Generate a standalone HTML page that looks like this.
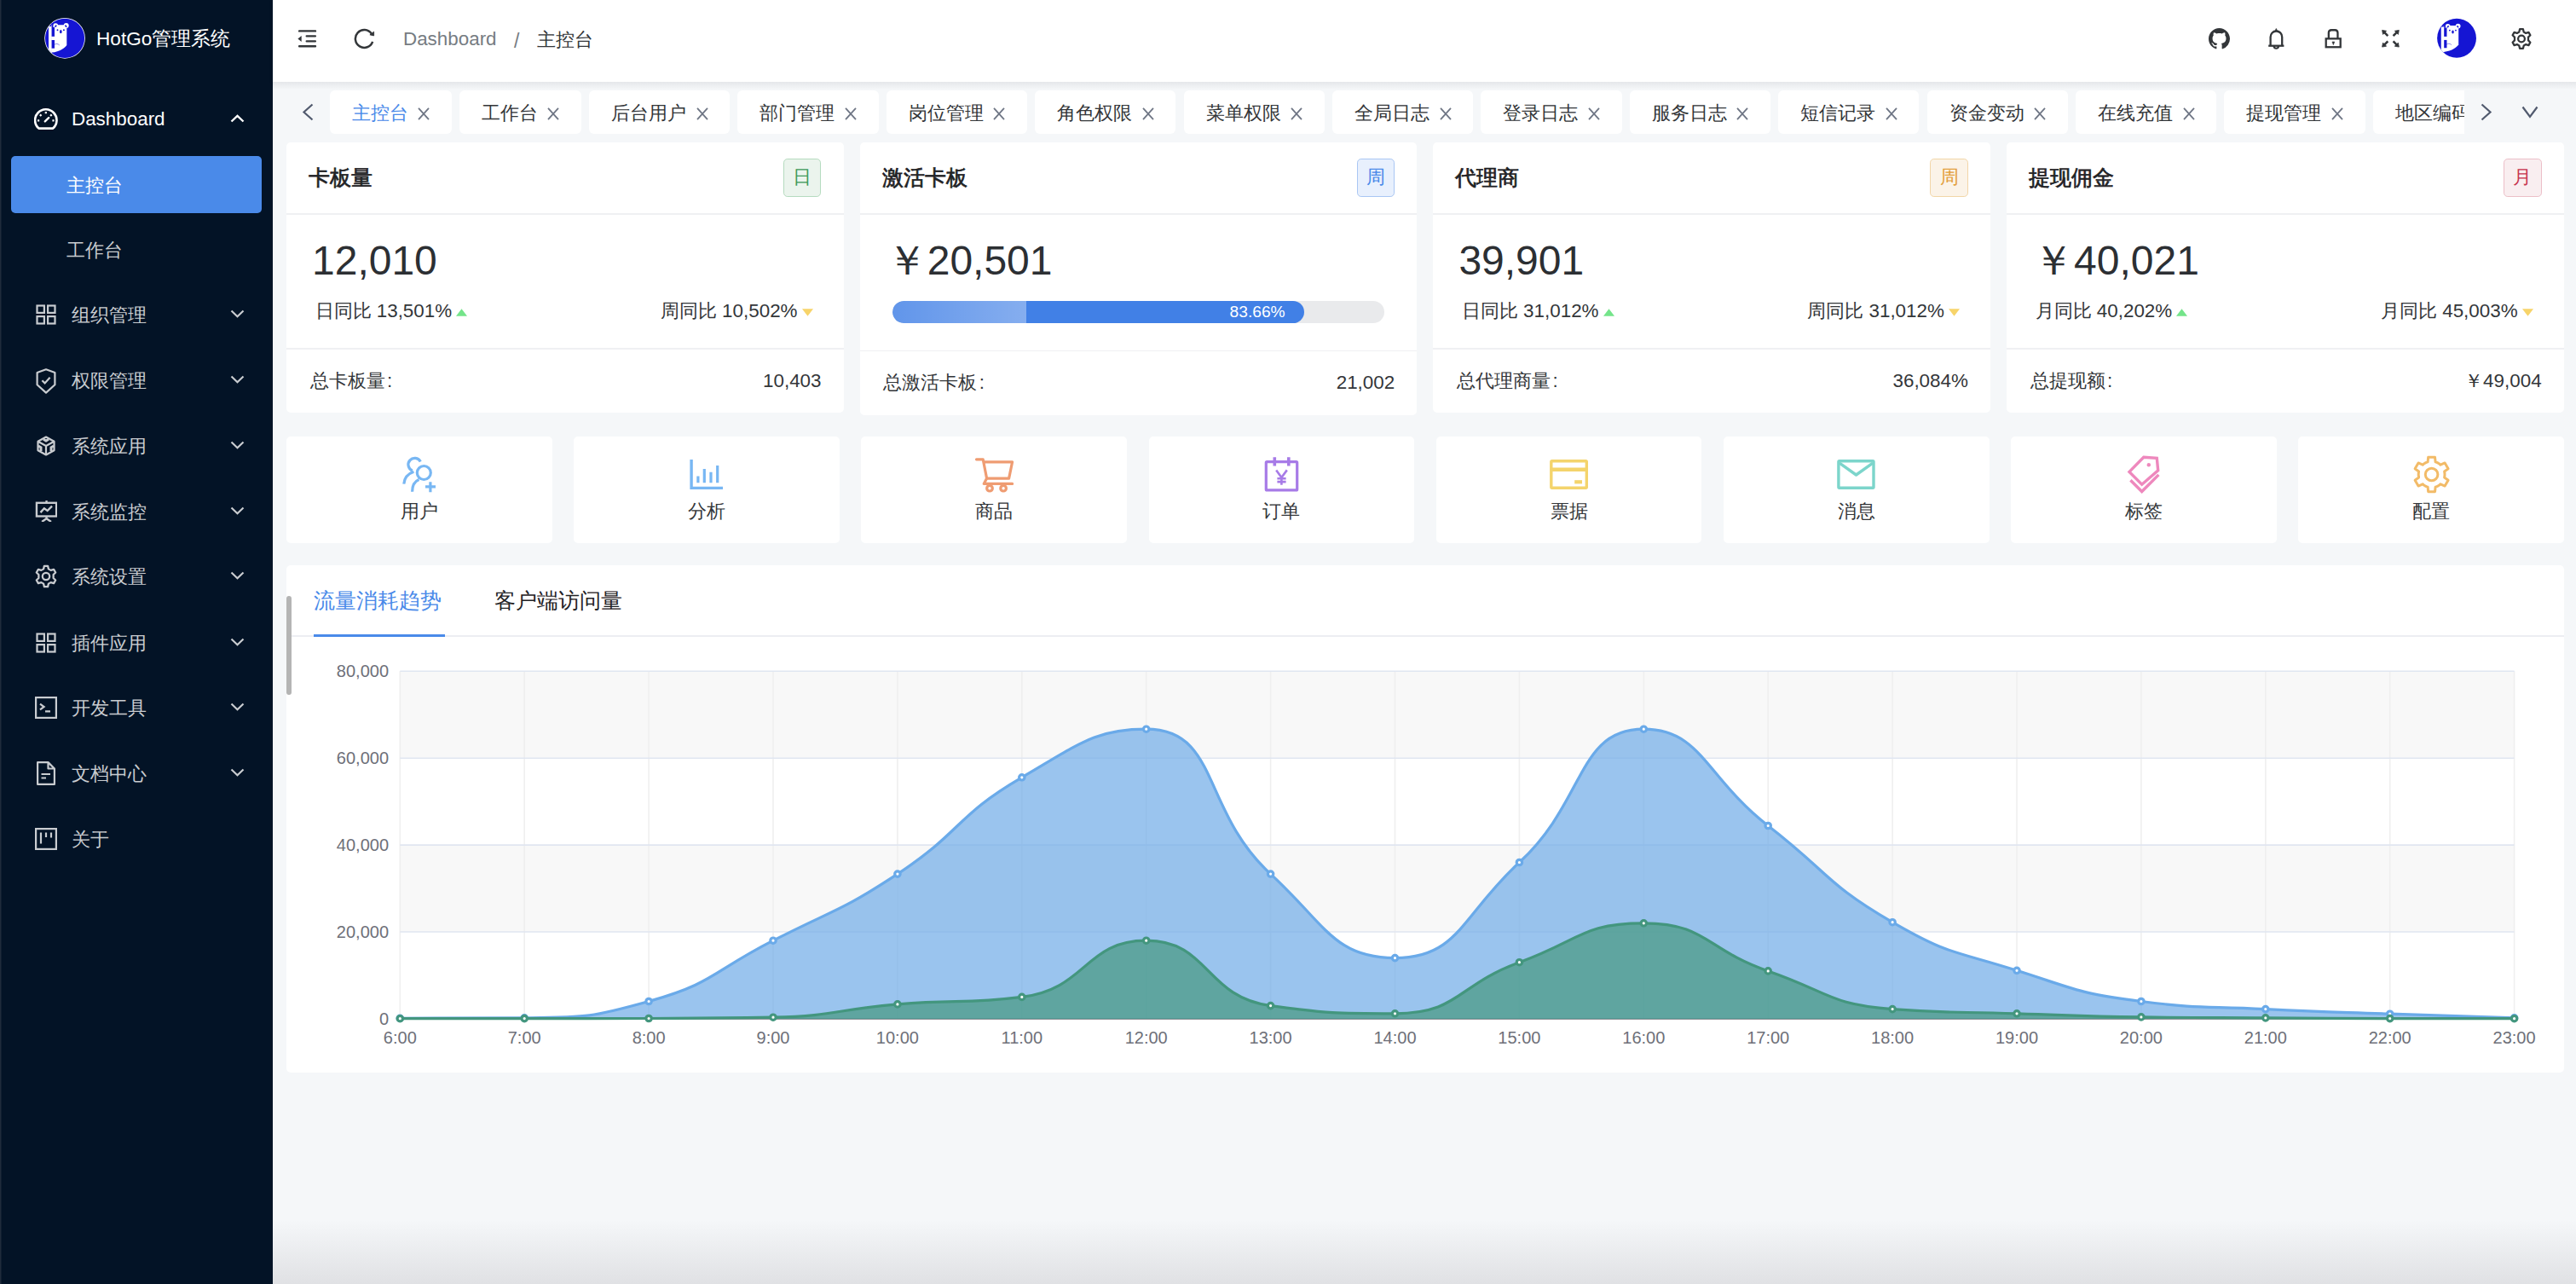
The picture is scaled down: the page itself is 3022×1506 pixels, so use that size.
<!DOCTYPE html>
<html><head><meta charset="utf-8">
<style>
*{box-sizing:border-box;margin:0;padding:0}
html,body{width:3022px;height:1506px;overflow:hidden;background:#f5f7f9;font-family:"Liberation Sans",sans-serif;color:#333639}
.abs{position:absolute}
#sider{position:absolute;left:0;top:0;width:320px;height:1506px;background:#031326;box-shadow:inset 1.5px 0 0 #1f2b3b}
#sider .logo-text{position:absolute;left:113px;top:27px;font-size:22.6px;line-height:38px;color:#fff;white-space:nowrap}
.mi{position:absolute;left:0;width:320px;height:67px}
.mi .ic{position:absolute;left:42px;top:21.5px;width:24px;height:24px}
.mi .tx{position:absolute;left:84px;top:0.8px;line-height:67px;font-size:22.4px;color:#c9ccd0;white-space:nowrap}
.mi .ch{position:absolute;left:270px;top:28px;width:17px;height:10px}
.sub .tx{left:78px}
#header{position:absolute;left:320px;top:0;width:2702px;height:96px;background:#fff;box-shadow:0 1px 6px rgba(0,21,41,0.06)}
.tabs{position:absolute;left:320px;top:96px;width:2702px;height:70px;background:#f5f7f9}
.tab{position:absolute;top:106px;height:51px;background:#fff;border-radius:6px;overflow:hidden;white-space:nowrap}
.tab .t{position:absolute;left:26px;top:0.7px;line-height:51px;font-size:22.4px;color:#333639}
.tab .x{position:absolute;top:19.5px;width:14px;height:15px}
.card{position:absolute;top:167px;width:653.5px;height:317px;background:#fff;border-radius:5px}
.card .title{position:absolute;left:26px;top:187px;font-size:25.6px;font-weight:600;color:#1f2225}
.qa{position:absolute;top:512px;width:311.6px;height:124.5px;background:#fff;border-radius:5px}
.card .ctitle{font-size:24.6px;font-weight:400;-webkit-text-stroke:0.7px #1f2225;color:#1f2225;white-space:nowrap}
.card .tag{width:44.6px;height:44.6px;border:1.6px solid;border-radius:4.8px;font-size:22.4px;line-height:41.4px;text-align:center}
.card .hr{left:0;width:100%;height:1.6px;background:#eff0f3}
.card .cnum{top:111px;font-size:48px;line-height:56px;color:#2c2f33;white-space:nowrap}
.card .csub{top:181px;font-size:22.4px;line-height:34px;color:#333639;white-space:nowrap}
.card .tri{display:inline-block;margin-left:5px;vertical-align:middle}
.card .cft{top:262.5px;font-size:22.4px;line-height:34px;color:#333639;white-space:nowrap}
.prog{left:38.3px;top:185.8px;width:577px;height:25.8px;border-radius:13px;background:#e9eaec;overflow:hidden}
.prog .fill{position:absolute;left:0;top:0;height:100%;width:83.66%;background:#4180e6;border-radius:13px;overflow:hidden}
.prog .shine{position:absolute;left:0;top:0;height:100%;width:156.6px;background:linear-gradient(90deg,rgba(255,255,255,0.17),rgba(255,255,255,0.36))}
.prog span{position:absolute;right:22px;top:0;line-height:25.8px;font-size:19.2px;color:#fff}
.qa .qal{position:absolute;left:0;width:100%;top:71px;text-align:center;font-size:22.4px;line-height:34px;color:#333639}
.ctab{top:685px;font-size:25px;line-height:38px;color:#1f2225;white-space:nowrap}
.colon{margin-left:2.5px}
</style></head><body>

<div id="sider">
  <svg class="abs" style="left:50px;top:19px" width="52" height="52" viewBox="0 0 52 52">
    <defs><clipPath id="lc"><circle cx="26.05" cy="25.8" r="23.1"/></clipPath></defs>
    <circle cx="26.05" cy="25.8" r="23.85" fill="#fff"/>
    <circle cx="26.05" cy="25.8" r="23.1" fill="#1515d3"/>
    <g clip-path="url(#lc)" fill="#fff">
      <rect x="7" y="12" width="3.7" height="31"/>
      <path d="M10.2 10.3 H28.3 V33.9 C26 36.8 21 41.5 10.2 42.6 Z"/>
      <circle cx="15.2" cy="11.2" r="3"/><circle cx="27.7" cy="11" r="3"/>
    </g>
    <g fill="#1515d3">
      <rect x="10.6" y="12.9" width="3.4" height="10.9"/>
      <rect x="10.6" y="28" width="3.4" height="9.7"/>
      <rect x="10.6" y="8" width="1.8" height="5"/>
      <ellipse cx="15.4" cy="11.7" rx="0.9" ry="1.5" transform="rotate(40 15.4 11.7)"/>
      <ellipse cx="27.3" cy="11.7" rx="0.9" ry="1.5" transform="rotate(-40 27.3 11.7)"/>
      <circle cx="17.5" cy="16.2" r="0.95"/><circle cx="24.9" cy="16.2" r="0.95"/>
      <ellipse cx="21.3" cy="18.2" rx="1.3" ry="2.1"/>
    </g>
    <path d="M13.6 33.5 C15 32 18 32 19.8 34" stroke="#1515d3" stroke-width="0.5" fill="none"/>
  </svg>
  <div class="logo-text">HotGo管理系统</div>

  <!-- Dashboard -->
  <div class="mi" style="top:105px">
    <svg class="abs" style="left:40px;top:22px" width="28" height="26" viewBox="0 0 28 26" fill="none" stroke="#fff">
      <path d="M5.49 23.6 A12.7 12.7 0 1 1 22.11 23.6 Z" stroke-width="2.6" stroke-linejoin="round"/>
      <path d="M13.8 4 V6.2 M6.9 7.4 L8.5 9 M20.7 7.4 L19.1 9 M4 14.3 H6.2 M21.4 14.3 H23.6" stroke-width="2.2"/>
      <path d="M12.8 15.4 L17.2 11.2" stroke-width="2.4" stroke-linecap="round"/>
    </svg>
    <div class="tx" style="color:#fff">Dashboard</div>
    <svg class="ch" viewBox="0 0 17 10" style="top:29px"><path d="M1.5 8.5 L8.5 1.8 L15.5 8.5" fill="none" stroke="#fff" stroke-width="2.4"/></svg>
  </div>
  <div class="abs" style="left:13px;top:183px;width:294px;height:67px;background:#4a8ae9;border-radius:5px"></div>
  <div class="mi sub" style="top:183px"><div class="tx" style="color:#fff">主控台</div></div>
  <div class="mi sub" style="top:259px"><div class="tx">工作台</div></div>

  <!-- groups -->
  <div class="mi" style="top:335px">
    <svg class="ic" viewBox="0 0 24 24" fill="none" stroke="#c9ccd0" stroke-width="2.2"><rect x="1.5" y="1.5" width="8.4" height="8.4"/><rect x="14.1" y="1.5" width="8.4" height="8.4"/><rect x="1.5" y="14.1" width="8.4" height="8.4"/><rect x="14.1" y="14.1" width="8.4" height="8.4"/></svg>
    <div class="tx">组织管理</div>
    <svg class="ch" viewBox="0 0 17 10"><path d="M1.5 1.5 L8.5 8.2 L15.5 1.5" fill="none" stroke="#c9ccd0" stroke-width="2.2"/></svg>
  </div>
  <div class="mi" style="top:412px">
    <svg class="ic" viewBox="0 0 24 30" fill="none" stroke="#c9ccd0" stroke-width="2.2" style="height:30px;top:19.5px"><path d="M12 1.3 L22.4 5 V19.2 L12 28.6 L1.6 19.2 V5 Z" stroke-linejoin="round"/><path d="M7.4 14.2 L10.6 17.4 L16.6 10.8"/></svg>
    <div class="tx">权限管理</div>
    <svg class="ch" viewBox="0 0 17 10"><path d="M1.5 1.5 L8.5 8.2 L15.5 1.5" fill="none" stroke="#c9ccd0" stroke-width="2.2"/></svg>
  </div>
  <div class="mi" style="top:489px">
    <svg class="ic" viewBox="0 0 24 24" fill="none" stroke="#c9ccd0" stroke-width="2.2"><path d="M12 1.5 L21.5 6.8 V17.2 L12 22.5 L2.5 17.2 V6.8 Z" stroke-linejoin="round"/><path d="M2.5 6.8 L12 12 L21.5 6.8 M12 12 V22.5"/><path d="M9 4.2 L12 6 L15 4.2" stroke-width="3"/><path d="M3 12 L6 13.8 V18 M21 12 L18 13.8 V18" stroke-width="3"/></svg>
    <div class="tx">系统应用</div>
    <svg class="ch" viewBox="0 0 17 10"><path d="M1.5 1.5 L8.5 8.2 L15.5 1.5" fill="none" stroke="#c9ccd0" stroke-width="2.2"/></svg>
  </div>
  <div class="mi" style="top:566px">
    <svg class="ic" viewBox="0 0 24 24" fill="none" stroke="#c9ccd0" stroke-width="2.2" style="left:41px;width:26px;height:26px;top:20px"><path d="M12.5 1 V3.5"/><rect x="1.8" y="3.5" width="21.4" height="14.5"/><path d="M6 14 L10 9.5 L13.5 12 L18.5 7"/><path d="M12.5 18 V21 M7.5 24 L12.5 20.5 L17.5 24"/></svg>
    <div class="tx">系统监控</div>
    <svg class="ch" viewBox="0 0 17 10"><path d="M1.5 1.5 L8.5 8.2 L15.5 1.5" fill="none" stroke="#c9ccd0" stroke-width="2.2"/></svg>
  </div>
  <div class="mi" style="top:642px">
    <svg class="ic" viewBox="0 0 24 24" fill="none" stroke="#c9ccd0" stroke-width="1.95" style="left:40px;width:28px;height:28px;top:20px"><path d="M10.2 1.6 H13.8 L14.5 4.6 L16.8 5.9 L19.8 5 L21.6 8.1 L19.4 10.3 V13.7 L21.6 15.9 L19.8 19 L16.8 18.1 L14.5 19.4 L13.8 22.4 H10.2 L9.5 19.4 L7.2 18.1 L4.2 19 L2.4 15.9 L4.6 13.7 V10.3 L2.4 8.1 L4.2 5 L7.2 5.9 L9.5 4.6 Z" stroke-linejoin="round"/><circle cx="12" cy="12" r="3.6"/></svg>
    <div class="tx">系统设置</div>
    <svg class="ch" viewBox="0 0 17 10"><path d="M1.5 1.5 L8.5 8.2 L15.5 1.5" fill="none" stroke="#c9ccd0" stroke-width="2.2"/></svg>
  </div>
  <div class="mi" style="top:720px">
    <svg class="ic" viewBox="0 0 24 24" fill="none" stroke="#c9ccd0" stroke-width="2.2"><rect x="1.5" y="1.5" width="8.4" height="8.4"/><rect x="14.1" y="1.5" width="8.4" height="8.4"/><rect x="1.5" y="14.1" width="8.4" height="8.4"/><rect x="14.1" y="14.1" width="8.4" height="8.4"/></svg>
    <div class="tx">插件应用</div>
    <svg class="ch" viewBox="0 0 17 10"><path d="M1.5 1.5 L8.5 8.2 L15.5 1.5" fill="none" stroke="#c9ccd0" stroke-width="2.2"/></svg>
  </div>
  <div class="mi" style="top:796px">
    <svg class="ic" viewBox="0 0 26 26" fill="none" stroke="#c9ccd0" stroke-width="2.2" style="left:40.8px;width:26px;height:26px;top:21px"><rect x="1.1" y="1.1" width="23.8" height="23.8"/><path d="M6 8.6 L10.6 12 L6 15.4 M12 17.4 H18"/></svg>
    <div class="tx">开发工具</div>
    <svg class="ch" viewBox="0 0 17 10"><path d="M1.5 1.5 L8.5 8.2 L15.5 1.5" fill="none" stroke="#c9ccd0" stroke-width="2.2"/></svg>
  </div>
  <div class="mi" style="top:873px">
    <svg class="ic" viewBox="0 0 22 28" fill="none" stroke="#c9ccd0" stroke-width="2.2" style="left:43px;width:22px;height:28px;top:20px"><path d="M1.1 1.1 H13.5 L20.9 8.5 V26.9 H1.1 Z M13.5 1.1 V8.5 H20.9" stroke-linejoin="round"/><path d="M5.5 15 H16 M5.5 19.5 H11"/></svg>
    <div class="tx">文档中心</div>
    <svg class="ch" viewBox="0 0 17 10"><path d="M1.5 1.5 L8.5 8.2 L15.5 1.5" fill="none" stroke="#c9ccd0" stroke-width="2.2"/></svg>
  </div>
  <div class="mi" style="top:950px">
    <svg class="ic" viewBox="0 0 26 26" fill="none" stroke="#c9ccd0" stroke-width="2.2" style="left:40.8px;width:26px;height:26px;top:21px"><rect x="1.1" y="1.1" width="23.8" height="23.8"/><path d="M7 5.5 V18.5 M13 5.5 V11 M19 5.5 V11.5"/></svg>
    <div class="tx">关于</div>
  </div>
</div>
<div id="header">
  <svg class="abs" style="left:29px;top:35px" width="24" height="21" viewBox="0 0 24 21" fill="none" stroke="#333639" stroke-width="2.35" stroke-linecap="round">
    <path d="M2.1 1.44 H21 M10.7 7.3 H20.9 M10.7 13.3 H20.9 M2.1 19.25 H21"/>
    <path d="M0.4 10.5 L4.7 7.1 V13.9 Z" fill="#333639" stroke="none"/>
  </svg>
  <svg class="abs" style="left:95px;top:32px" width="26" height="26" viewBox="0 0 26 26" fill="none" stroke="#333639" stroke-width="2.5">
    <path d="M22.13 16.89 A10.4 10.4 0 1 1 20.82 7.53"/>
    <path d="M18.9 8.8 L23.6 5.2 V9.9 Z" fill="#333639" stroke-width="0.9" stroke-linejoin="round"/>
  </svg>
  <div class="abs" style="left:153px;top:-2.5px;line-height:96px;font-size:22.4px;color:#767c82;white-space:nowrap">Dashboard</div>
  <div class="abs" style="left:283px;top:0;line-height:96px;font-size:23px;color:#767c82">/</div>
  <div class="abs" style="left:309.5px;top:-1.5px;line-height:96px;font-size:22.4px;color:#333639;white-space:nowrap">主控台</div>

  <!-- right icons -->
  <svg class="abs" style="left:2271px;top:33px" width="25" height="25" viewBox="0 0 16 16" fill="#333639"><path d="M8 0C3.58 0 0 3.58 0 8c0 3.54 2.29 6.53 5.47 7.59.4.07.55-.17.55-.38 0-.19-.01-.82-.01-1.49-2.01.37-2.53-.49-2.69-.94-.09-.23-.48-.94-.82-1.13-.28-.15-.68-.52-.01-.53.63-.01 1.08.58 1.23.82.72 1.21 1.87.87 2.33.66.07-.52.28-.87.51-1.07-1.78-.2-3.64-.89-3.64-3.95 0-.87.31-1.59.82-2.15-.08-.2-.36-1.02.08-2.12 0 0 .67-.21 2.2.82.64-.18 1.32-.27 2-.27.68 0 1.36.09 2 .27 1.53-1.04 2.2-.82 2.2-.82.44 1.1.16 1.92.08 2.12.51.56.82 1.27.82 2.15 0 3.07-1.87 3.75-3.65 3.95.29.25.54.73.54 1.48 0 1.07-.01 1.93-.01 2.2 0 .21.15.46.55.38A8.013 8.013 0 0016 8c0-4.42-3.58-8-8-8z"/></svg>
  <svg class="abs" style="left:2339px;top:33px" width="23" height="26" viewBox="0 0 23 26" fill="none" stroke="#333639" stroke-width="2.3">
    <path d="M4.6 20.7 V10.6 C4.6 6.3 7.6 3.5 11.3 3.5 C15 3.5 18.2 6.3 18.2 10.6 V20.7" stroke-linejoin="round"/>
    <path d="M2.2 20.7 H20.4"/><path d="M11.3 0.5 L12.6 3.4 H10 Z" fill="#333639" stroke-width="0.8"/>
    <path d="M8.6 21 A2.7 2.7 0 0 0 14 21" stroke-width="2.1"/>
  </svg>
  <svg class="abs" style="left:2406px;top:33px" width="23" height="25" viewBox="0 0 23 25" fill="none" stroke="#333639" stroke-width="2.3">
    <rect x="2.7" y="12.35" width="17" height="9.9"/>
    <path d="M5.85 12.3 V5.6 Q5.85 2.25 9.1 2.25 H13.2 Q16.45 2.25 16.45 5.6 V12.3"/>
    <path d="M9.95 16 H12.75 L11.35 19.6 Z" fill="#333639" stroke-width="0.6" stroke-linejoin="round"/>
  </svg>
  <svg class="abs" style="left:2473px;top:34px" width="23" height="23" viewBox="0 0 23 23" fill="#333639" stroke="#333639" stroke-width="2.6">
    <path d="M8.3 8.1 L3.4 3.2 M14.6 8.1 L19.5 3.2 M8.3 14.4 L3.4 19.3 M14.6 14.4 L19.5 19.3"/>
    <path d="M1.6 1.4 L6.6 2.3 L2.5 6.4 Z M21.3 1.4 L16.3 2.3 L20.4 6.4 Z M1.6 21.1 L6.6 20.2 L2.5 16.1 Z M21.3 21.1 L16.3 20.2 L20.4 16.1 Z" stroke-width="0.8" stroke-linejoin="round"/>
  </svg>
  <svg class="abs" style="left:2537px;top:20px" width="50" height="50" viewBox="0 0 52 52">
    <defs><clipPath id="ac"><circle cx="26.05" cy="25.8" r="23.85"/></clipPath></defs>
    
    <circle cx="26.05" cy="25.8" r="23.85" fill="#1515d3"/>
    <g clip-path="url(#ac)" fill="#fff">
      <rect x="7" y="12" width="3.7" height="31"/>
      <path d="M10.2 10.3 H28.3 V33.9 C26 36.8 21 41.5 10.2 42.6 Z"/>
      <circle cx="15.2" cy="11.2" r="3"/><circle cx="27.7" cy="11" r="3"/>
    </g>
    <g fill="#1515d3">
      <rect x="10.6" y="12.9" width="3.4" height="10.9"/>
      <rect x="10.6" y="28" width="3.4" height="9.7"/>
      <rect x="10.6" y="8" width="1.8" height="5"/>
      <ellipse cx="15.4" cy="11.7" rx="0.9" ry="1.5" transform="rotate(40 15.4 11.7)"/>
      <ellipse cx="27.3" cy="11.7" rx="0.9" ry="1.5" transform="rotate(-40 27.3 11.7)"/>
      <circle cx="17.5" cy="16.2" r="0.95"/><circle cx="24.9" cy="16.2" r="0.95"/>
      <ellipse cx="21.3" cy="18.2" rx="1.3" ry="2.1"/>
    </g>
    <path d="M13.6 33.5 C15 32 18 32 19.8 34" stroke="#1515d3" stroke-width="0.5" fill="none"/>
  </svg>
  <svg class="abs" style="left:2625px;top:32px" width="26" height="27" viewBox="0 0 24 24" fill="none" stroke="#333639" stroke-width="2.1">
    <path d="M10.2 1.6 H13.8 L14.5 4.6 L16.8 5.9 L19.8 5 L21.6 8.1 L19.4 10.3 V13.7 L21.6 15.9 L19.8 19 L16.8 18.1 L14.5 19.4 L13.8 22.4 H10.2 L9.5 19.4 L7.2 18.1 L4.2 19 L2.4 15.9 L4.6 13.7 V10.3 L2.4 8.1 L4.2 5 L7.2 5.9 L9.5 4.6 Z" stroke-linejoin="round"/><circle cx="12" cy="12" r="3.6"/>
  </svg>
</div>
<div class="abs" style="left:320px;top:96px;width:2702px;height:1410px;background:linear-gradient(#e5e7ea,#f5f7f9 9px,#f5f7f9 1335px,#e0e1e4)"></div>
<div class="abs" style="left:380px;top:96px;width:2511px;height:70px;overflow:hidden">
<div class="tab" style="left:7.0px;top:10px;width:142.8px"><span class="t" style="color:#4a8ae9">主控台</span><svg class="x" style="left:103.2px" viewBox="0 0 14 15"><path d="M1 0.8 L13 14.2 M13 0.8 L1 14.2" stroke="#6f7685" stroke-width="1.8" fill="none"/></svg></div>
<div class="tab" style="left:159.0px;top:10px;width:142.8px"><span class="t" style="color:#333639">工作台</span><svg class="x" style="left:103.2px" viewBox="0 0 14 15"><path d="M1 0.8 L13 14.2 M13 0.8 L1 14.2" stroke="#6f7685" stroke-width="1.8" fill="none"/></svg></div>
<div class="tab" style="left:311.0px;top:10px;width:165.2px"><span class="t" style="color:#333639">后台用户</span><svg class="x" style="left:125.6px" viewBox="0 0 14 15"><path d="M1 0.8 L13 14.2 M13 0.8 L1 14.2" stroke="#6f7685" stroke-width="1.8" fill="none"/></svg></div>
<div class="tab" style="left:485.4px;top:10px;width:165.2px"><span class="t" style="color:#333639">部门管理</span><svg class="x" style="left:125.6px" viewBox="0 0 14 15"><path d="M1 0.8 L13 14.2 M13 0.8 L1 14.2" stroke="#6f7685" stroke-width="1.8" fill="none"/></svg></div>
<div class="tab" style="left:659.8px;top:10px;width:165.2px"><span class="t" style="color:#333639">岗位管理</span><svg class="x" style="left:125.6px" viewBox="0 0 14 15"><path d="M1 0.8 L13 14.2 M13 0.8 L1 14.2" stroke="#6f7685" stroke-width="1.8" fill="none"/></svg></div>
<div class="tab" style="left:834.2px;top:10px;width:165.2px"><span class="t" style="color:#333639">角色权限</span><svg class="x" style="left:125.6px" viewBox="0 0 14 15"><path d="M1 0.8 L13 14.2 M13 0.8 L1 14.2" stroke="#6f7685" stroke-width="1.8" fill="none"/></svg></div>
<div class="tab" style="left:1008.6px;top:10px;width:165.2px"><span class="t" style="color:#333639">菜单权限</span><svg class="x" style="left:125.6px" viewBox="0 0 14 15"><path d="M1 0.8 L13 14.2 M13 0.8 L1 14.2" stroke="#6f7685" stroke-width="1.8" fill="none"/></svg></div>
<div class="tab" style="left:1183.0px;top:10px;width:165.2px"><span class="t" style="color:#333639">全局日志</span><svg class="x" style="left:125.6px" viewBox="0 0 14 15"><path d="M1 0.8 L13 14.2 M13 0.8 L1 14.2" stroke="#6f7685" stroke-width="1.8" fill="none"/></svg></div>
<div class="tab" style="left:1357.4px;top:10px;width:165.2px"><span class="t" style="color:#333639">登录日志</span><svg class="x" style="left:125.6px" viewBox="0 0 14 15"><path d="M1 0.8 L13 14.2 M13 0.8 L1 14.2" stroke="#6f7685" stroke-width="1.8" fill="none"/></svg></div>
<div class="tab" style="left:1531.8px;top:10px;width:165.2px"><span class="t" style="color:#333639">服务日志</span><svg class="x" style="left:125.6px" viewBox="0 0 14 15"><path d="M1 0.8 L13 14.2 M13 0.8 L1 14.2" stroke="#6f7685" stroke-width="1.8" fill="none"/></svg></div>
<div class="tab" style="left:1706.2px;top:10px;width:165.2px"><span class="t" style="color:#333639">短信记录</span><svg class="x" style="left:125.6px" viewBox="0 0 14 15"><path d="M1 0.8 L13 14.2 M13 0.8 L1 14.2" stroke="#6f7685" stroke-width="1.8" fill="none"/></svg></div>
<div class="tab" style="left:1880.6px;top:10px;width:165.2px"><span class="t" style="color:#333639">资金变动</span><svg class="x" style="left:125.6px" viewBox="0 0 14 15"><path d="M1 0.8 L13 14.2 M13 0.8 L1 14.2" stroke="#6f7685" stroke-width="1.8" fill="none"/></svg></div>
<div class="tab" style="left:2055.0px;top:10px;width:165.2px"><span class="t" style="color:#333639">在线充值</span><svg class="x" style="left:125.6px" viewBox="0 0 14 15"><path d="M1 0.8 L13 14.2 M13 0.8 L1 14.2" stroke="#6f7685" stroke-width="1.8" fill="none"/></svg></div>
<div class="tab" style="left:2229.4px;top:10px;width:165.2px"><span class="t" style="color:#333639">提现管理</span><svg class="x" style="left:125.6px" viewBox="0 0 14 15"><path d="M1 0.8 L13 14.2 M13 0.8 L1 14.2" stroke="#6f7685" stroke-width="1.8" fill="none"/></svg></div>
<div class="tab" style="left:2403.8px;top:10px;width:165.2px"><span class="t" style="color:#333639">地区编码</span><svg class="x" style="left:125.6px" viewBox="0 0 14 15"><path d="M1 0.8 L13 14.2 M13 0.8 L1 14.2" stroke="#6f7685" stroke-width="1.8" fill="none"/></svg></div>
</div>
<svg class="abs" style="left:354px;top:121px" width="14" height="21" viewBox="0 0 14 21"><path d="M12.5 1.5 L2.5 10.5 L12.5 19.5" fill="none" stroke="#515a6e" stroke-width="2.2"/></svg>
<svg class="abs" style="left:2910px;top:121px" width="14" height="21" viewBox="0 0 14 21"><path d="M1.5 1.5 L11.5 10.5 L1.5 19.5" fill="none" stroke="#515a6e" stroke-width="2.2"/></svg>
<svg class="abs" style="left:2958px;top:124px" width="20" height="15" viewBox="0 0 20 15"><path d="M1.5 1.5 L10 13 L18.5 1.5" fill="none" stroke="#515a6e" stroke-width="2.2"/></svg>
<div class="card" style="left:336.0px;height:317.0px"><div class="abs ctitle" style="left:26px;top:0;height:83.6px;line-height:83.6px">卡板量</div><div class="abs tag" style="left:582.9px;top:19px;background:#ebf4ed;border-color:#b5dbbf;color:#3f9b5b">日</div><div class="abs hr" style="top:83px"></div><div class="abs cnum" style="left:30px">12,010</div><div class="abs csub" style="left:33.5px">日同比 13,501%<svg class="tri" width="13" height="9" viewBox="0 0 13 9"><path d="M6.5 0.3 L13 8.8 H0 Z" fill="#74e48a"/></svg></div><div class="abs csub" style="right:36px;text-align:right">周同比 10,502%<svg class="tri" width="13" height="9" viewBox="0 0 13 9"><path d="M0 0.2 H13 L6.5 8.7 Z" fill="#f7d46a"/></svg></div><div class="abs hr" style="top:241.0px"></div><div class="abs cft" style="left:27.5px;top:262.5px">总卡板量<span class="colon">:</span></div><div class="abs cft" style="right:26px;text-align:right;top:262.5px">10,403</div></div>
<div class="card" style="left:1008.7px;height:319.8px"><div class="abs ctitle" style="left:26px;top:0;height:83.6px;line-height:83.6px">激活卡板</div><div class="abs tag" style="left:582.9px;top:19px;background:#e8f0fd;border-color:#a9c6f3;color:#4a8ae9">周</div><div class="abs hr" style="top:83px"></div><div class="abs cnum" style="left:31px">￥20,501</div><div class="abs prog"><div class="fill"><div class="shine"></div><span>83.66%</span></div></div><div class="abs hr" style="top:243.8px"></div><div class="abs cft" style="left:27.5px;top:265.3px">总激活卡板<span class="colon">:</span></div><div class="abs cft" style="right:26px;text-align:right;top:265.3px">21,002</div></div>
<div class="card" style="left:1681.4px;height:317.0px"><div class="abs ctitle" style="left:26px;top:0;height:83.6px;line-height:83.6px">代理商</div><div class="abs tag" style="left:582.9px;top:19px;background:#fbf3e8;border-color:#f2d6a8;color:#e3a03e">周</div><div class="abs hr" style="top:83px"></div><div class="abs cnum" style="left:30px">39,901</div><div class="abs csub" style="left:33.5px">日同比 31,012%<svg class="tri" width="13" height="9" viewBox="0 0 13 9"><path d="M6.5 0.3 L13 8.8 H0 Z" fill="#74e48a"/></svg></div><div class="abs csub" style="right:36px;text-align:right">周同比 31,012%<svg class="tri" width="13" height="9" viewBox="0 0 13 9"><path d="M0 0.2 H13 L6.5 8.7 Z" fill="#f7d46a"/></svg></div><div class="abs hr" style="top:241.0px"></div><div class="abs cft" style="left:27.5px;top:262.5px">总代理商量<span class="colon">:</span></div><div class="abs cft" style="right:26px;text-align:right;top:262.5px">36,084%</div></div>
<div class="card" style="left:2354.1px;height:317.0px"><div class="abs ctitle" style="left:26px;top:0;height:83.6px;line-height:83.6px">提现佣金</div><div class="abs tag" style="left:582.9px;top:19px;background:#f9eef0;border-color:#ecbfc8;color:#c8354f">月</div><div class="abs hr" style="top:83px"></div><div class="abs cnum" style="left:31px">￥40,021</div><div class="abs csub" style="left:33.5px">月同比 40,202%<svg class="tri" width="13" height="9" viewBox="0 0 13 9"><path d="M6.5 0.3 L13 8.8 H0 Z" fill="#74e48a"/></svg></div><div class="abs csub" style="right:36px;text-align:right">月同比 45,003%<svg class="tri" width="13" height="9" viewBox="0 0 13 9"><path d="M0 0.2 H13 L6.5 8.7 Z" fill="#f7d46a"/></svg></div><div class="abs hr" style="top:241.0px"></div><div class="abs cft" style="left:27.5px;top:262.5px">总提现额<span class="colon">:</span></div><div class="abs cft" style="right:26px;text-align:right;top:262.5px">￥49,004</div></div>
<div class="qa" style="left:336.0px"><div class="qal">用户</div></div>
<div class="qa" style="left:673.2px"><div class="qal">分析</div></div>
<div class="qa" style="left:1010.4px"><div class="qal">商品</div></div>
<div class="qa" style="left:1347.6px"><div class="qal">订单</div></div>
<div class="qa" style="left:1684.8px"><div class="qal">票据</div></div>
<div class="qa" style="left:2022.0px"><div class="qal">消息</div></div>
<div class="qa" style="left:2359.2px"><div class="qal">标签</div></div>
<div class="qa" style="left:2696.4px"><div class="qal">配置</div></div>
<svg class="abs" style="left:0;top:0" width="3022" height="700" viewBox="0 0 3022 700" fill="none" stroke-width="3.2">
<g stroke="#78b7f3"><path d="M493.3 541.4 A7.6 7.6 0 1 0 483.8 552.0"/><path d="M485.4 553.2 C478.5 555.6 474.3 561 473.8 567.6"/><circle cx="497.3" cy="554.5" r="8"/><path d="M491.5 562.6 C486.2 564.8 483.6 570 483.6 576.8"/><path d="M499 570.9 H511 M504.9 565.2 V577.2"/></g>
<g stroke="#78b7f3"><path d="M811.1 539 V572.4 H848" stroke-width="3.4"/><path d="M818.9 558.6 V566.3 M826.3 549.9 V566.3 M834 553.7 V566.3 M841.7 546 V566.3" stroke-width="3.2"/></g>
<g stroke="#ef9c72" stroke-linejoin="round" stroke-linecap="round"><path d="M1145.5 538.8 H1153.2 L1157.6 561.1 H1183.6 L1187.6 541.8 H1154"/><path d="M1157.6 561.1 L1154.2 567.4 H1187.6"/><circle cx="1161" cy="572.7" r="3.3"/><circle cx="1177.1" cy="572.7" r="3.3"/></g>
<g stroke="#a77be7"><rect x="1485.3" y="541.7" width="36.4" height="33.2" rx="1"/><path d="M1495.3 536.2 V546.4 M1511.8 536.2 V546.4" stroke-width="3.6"/><path d="M1497.2 551.4 L1503.4 560 L1509.8 551.4 M1503.4 560 V568.8 M1498.4 561.3 H1508.6 M1498.4 565.1 H1508.6" stroke-width="2.6"/></g>
<g stroke="#f4d46c"><rect x="1819.8" y="540.7" width="41.5" height="31.6" rx="1" stroke-width="3.4"/><path d="M1819.8 550.8 H1861.3" stroke-width="4.4"/><rect x="1847.2" y="563.2" width="8.8" height="4.2" fill="#f4d46c" stroke="none"/></g>
<g stroke="#7cd5cb" stroke-linejoin="round"><rect x="2156.9" y="540.7" width="41.1" height="31.6" rx="1" stroke-width="3.4"/><path d="M2158 543.2 L2177.5 557 L2197 543.2" stroke-width="3.4"/></g>
<g stroke="#ee88bd" stroke-width="3.4"><path d="M2514.8 536.2 L2530.3 537.3 L2531.7 551.8 L2512.7 568.2 L2498 553.4 Z" stroke-linejoin="miter"/><circle cx="2520.8" cy="545.3" r="2.2" fill="#ee88bd" stroke="none"/><path d="M2499.4 563.2 L2512.7 576.5 L2532.4 556.9"/></g>
<g stroke="#f2bb68" stroke-width="3" stroke-linejoin="round"><path d="M2848.10 541.77 L2848.67 536.28 L2856.53 536.28 L2857.10 541.77 L2858.74 542.38 L2860.30 543.16 L2861.76 544.12 L2863.10 545.24 L2868.15 542.99 L2872.08 549.79 L2867.61 553.04 L2867.90 554.76 L2868.00 556.50 L2867.90 558.24 L2867.61 559.96 L2872.08 563.21 L2868.15 570.01 L2863.10 567.76 L2861.76 568.88 L2860.30 569.84 L2858.74 570.62 L2857.10 571.23 L2856.53 576.72 L2848.67 576.72 L2848.10 571.23 L2846.46 570.62 L2844.90 569.84 L2843.44 568.88 L2842.10 567.76 L2837.05 570.01 L2833.12 563.21 L2837.59 559.96 L2837.30 558.24 L2837.20 556.50 L2837.30 554.76 L2837.59 553.04 L2833.12 549.79 L2837.05 542.99 L2842.10 545.24 L2843.44 544.12 L2844.90 543.16 L2846.46 542.38 Z"/><circle cx="2852.6" cy="556.5" r="7.3"/></g>
</svg>
<div class="abs" style="left:336px;top:663px;width:2672px;height:595px;background:#fff;border-radius:5px"></div>
<div class="abs ctab" style="left:368px;color:#4a8ae9">流量消耗趋势</div>
<div class="abs ctab" style="left:580px">客户端访问量</div>
<div class="abs" style="left:342px;top:745px;width:2666px;height:1.6px;background:#eceef2"></div>
<div class="abs" style="left:368px;top:743.6px;width:154px;height:3.2px;background:#4a8ae9"></div>
<div class="abs" style="left:336px;top:699px;width:6px;height:116px;background:#b4b4b4;border-radius:3px"></div>
<svg id="chart" width="3022" height="1506" viewBox="0 0 3022 1506" style="position:absolute;left:0;top:0">
<rect x="469.3" y="787.3" width="2480.3" height="101.9" fill="#f8f8f8"/>
<rect x="469.3" y="889.2" width="2480.3" height="101.9" fill="#ffffff"/>
<rect x="469.3" y="991.1" width="2480.3" height="101.9" fill="#f8f8f8"/>
<rect x="469.3" y="1093.0" width="2480.3" height="101.9" fill="#ffffff"/>
<line x1="469.3" y1="787.3" x2="469.3" y2="1194.9" stroke="#efefef" stroke-width="1.6"/>
<line x1="615.2" y1="787.3" x2="615.2" y2="1194.9" stroke="#efefef" stroke-width="1.6"/>
<line x1="761.1" y1="787.3" x2="761.1" y2="1194.9" stroke="#efefef" stroke-width="1.6"/>
<line x1="907.0" y1="787.3" x2="907.0" y2="1194.9" stroke="#efefef" stroke-width="1.6"/>
<line x1="1052.9" y1="787.3" x2="1052.9" y2="1194.9" stroke="#efefef" stroke-width="1.6"/>
<line x1="1198.8" y1="787.3" x2="1198.8" y2="1194.9" stroke="#efefef" stroke-width="1.6"/>
<line x1="1344.7" y1="787.3" x2="1344.7" y2="1194.9" stroke="#efefef" stroke-width="1.6"/>
<line x1="1490.6" y1="787.3" x2="1490.6" y2="1194.9" stroke="#efefef" stroke-width="1.6"/>
<line x1="1636.5" y1="787.3" x2="1636.5" y2="1194.9" stroke="#efefef" stroke-width="1.6"/>
<line x1="1782.4" y1="787.3" x2="1782.4" y2="1194.9" stroke="#efefef" stroke-width="1.6"/>
<line x1="1928.3" y1="787.3" x2="1928.3" y2="1194.9" stroke="#efefef" stroke-width="1.6"/>
<line x1="2074.2" y1="787.3" x2="2074.2" y2="1194.9" stroke="#efefef" stroke-width="1.6"/>
<line x1="2220.1" y1="787.3" x2="2220.1" y2="1194.9" stroke="#efefef" stroke-width="1.6"/>
<line x1="2366.0" y1="787.3" x2="2366.0" y2="1194.9" stroke="#efefef" stroke-width="1.6"/>
<line x1="2511.9" y1="787.3" x2="2511.9" y2="1194.9" stroke="#efefef" stroke-width="1.6"/>
<line x1="2657.8" y1="787.3" x2="2657.8" y2="1194.9" stroke="#efefef" stroke-width="1.6"/>
<line x1="2803.7" y1="787.3" x2="2803.7" y2="1194.9" stroke="#efefef" stroke-width="1.6"/>
<line x1="2949.6" y1="787.3" x2="2949.6" y2="1194.9" stroke="#efefef" stroke-width="1.6"/>
<line x1="469.3" y1="787.3" x2="2949.6" y2="787.3" stroke="#e0e6f1" stroke-width="1.6"/>
<line x1="469.3" y1="889.2" x2="2949.6" y2="889.2" stroke="#e0e6f1" stroke-width="1.6"/>
<line x1="469.3" y1="991.1" x2="2949.6" y2="991.1" stroke="#e0e6f1" stroke-width="1.6"/>
<line x1="469.3" y1="1093.0" x2="2949.6" y2="1093.0" stroke="#e0e6f1" stroke-width="1.6"/>
<line x1="469.3" y1="1194.9" x2="2949.6" y2="1194.9" stroke="#6e7079" stroke-width="1.6"/>
<path d="M 469.3 1194.3 C 469.3 1194.3 542.6 1194.3 615.2 1193.8 C 688.5 1193.2 691.7 1193.8 761.1 1174.5 C 837.6 1153.3 834.7 1140.2 907.0 1103.2 C 980.6 1065.5 983.9 1070.3 1052.9 1025.1 C 1129.8 974.6 1119.8 957.8 1198.8 911.8 C 1265.7 872.9 1284.7 855.2 1344.7 855.2 C 1430.6 855.2 1408.9 950.0 1490.6 1025.1 C 1554.8 1084.1 1565.2 1123.6 1636.5 1123.6 C 1711.1 1123.6 1714.9 1073.5 1782.4 1011.5 C 1860.8 939.4 1850.0 855.2 1928.3 855.2 C 1995.9 855.2 2001.2 911.8 2074.2 968.5 C 2147.1 1025.1 2141.1 1035.7 2220.1 1081.7 C 2287.0 1120.6 2291.6 1114.6 2366.0 1138.3 C 2437.5 1161.0 2437.9 1165.2 2511.9 1174.5 C 2583.8 1183.6 2584.8 1179.9 2657.8 1183.6 C 2730.7 1187.3 2730.7 1186.7 2803.7 1189.2 C 2876.6 1191.8 2949.6 1193.8 2949.6 1193.8 L 2949.6 1194.9 L 469.3 1194.9 Z" fill="rgba(111,171,231,0.7)"/>
<path d="M 469.3 1194.3 C 469.3 1194.3 542.6 1194.3 615.2 1193.8 C 688.5 1193.2 691.7 1193.8 761.1 1174.5 C 837.6 1153.3 834.7 1140.2 907.0 1103.2 C 980.6 1065.5 983.9 1070.3 1052.9 1025.1 C 1129.8 974.6 1119.8 957.8 1198.8 911.8 C 1265.7 872.9 1284.7 855.2 1344.7 855.2 C 1430.6 855.2 1408.9 950.0 1490.6 1025.1 C 1554.8 1084.1 1565.2 1123.6 1636.5 1123.6 C 1711.1 1123.6 1714.9 1073.5 1782.4 1011.5 C 1860.8 939.4 1850.0 855.2 1928.3 855.2 C 1995.9 855.2 2001.2 911.8 2074.2 968.5 C 2147.1 1025.1 2141.1 1035.7 2220.1 1081.7 C 2287.0 1120.6 2291.6 1114.6 2366.0 1138.3 C 2437.5 1161.0 2437.9 1165.2 2511.9 1174.5 C 2583.8 1183.6 2584.8 1179.9 2657.8 1183.6 C 2730.7 1187.3 2730.7 1186.7 2803.7 1189.2 C 2876.6 1191.8 2949.6 1193.8 2949.6 1193.8" fill="none" stroke="#6aaae9" stroke-width="3.2" stroke-linejoin="round"/>
<circle cx="469.3" cy="1194.3" r="3.2" fill="#fff" stroke="#6aaae9" stroke-width="3.2"/>
<circle cx="615.2" cy="1193.8" r="3.2" fill="#fff" stroke="#6aaae9" stroke-width="3.2"/>
<circle cx="761.1" cy="1174.5" r="3.2" fill="#fff" stroke="#6aaae9" stroke-width="3.2"/>
<circle cx="907.0" cy="1103.2" r="3.2" fill="#fff" stroke="#6aaae9" stroke-width="3.2"/>
<circle cx="1052.9" cy="1025.1" r="3.2" fill="#fff" stroke="#6aaae9" stroke-width="3.2"/>
<circle cx="1198.8" cy="911.8" r="3.2" fill="#fff" stroke="#6aaae9" stroke-width="3.2"/>
<circle cx="1344.7" cy="855.2" r="3.2" fill="#fff" stroke="#6aaae9" stroke-width="3.2"/>
<circle cx="1490.6" cy="1025.1" r="3.2" fill="#fff" stroke="#6aaae9" stroke-width="3.2"/>
<circle cx="1636.5" cy="1123.6" r="3.2" fill="#fff" stroke="#6aaae9" stroke-width="3.2"/>
<circle cx="1782.4" cy="1011.5" r="3.2" fill="#fff" stroke="#6aaae9" stroke-width="3.2"/>
<circle cx="1928.3" cy="855.2" r="3.2" fill="#fff" stroke="#6aaae9" stroke-width="3.2"/>
<circle cx="2074.2" cy="968.5" r="3.2" fill="#fff" stroke="#6aaae9" stroke-width="3.2"/>
<circle cx="2220.1" cy="1081.7" r="3.2" fill="#fff" stroke="#6aaae9" stroke-width="3.2"/>
<circle cx="2366.0" cy="1138.3" r="3.2" fill="#fff" stroke="#6aaae9" stroke-width="3.2"/>
<circle cx="2511.9" cy="1174.5" r="3.2" fill="#fff" stroke="#6aaae9" stroke-width="3.2"/>
<circle cx="2657.8" cy="1183.6" r="3.2" fill="#fff" stroke="#6aaae9" stroke-width="3.2"/>
<circle cx="2803.7" cy="1189.2" r="3.2" fill="#fff" stroke="#6aaae9" stroke-width="3.2"/>
<circle cx="2949.6" cy="1193.8" r="3.2" fill="#fff" stroke="#6aaae9" stroke-width="3.2"/>
<path d="M 469.3 1194.7 C 469.3 1194.7 542.2 1194.6 615.2 1194.6 C 688.1 1194.5 688.2 1194.6 761.1 1194.5 C 834.1 1194.3 834.2 1194.5 907.0 1193.2 C 980.1 1191.9 979.8 1183.9 1052.9 1177.9 C 1125.7 1172.0 1129.2 1177.9 1198.8 1169.4 C 1275.1 1160.1 1272.8 1103.2 1344.7 1103.2 C 1418.7 1103.2 1413.3 1169.3 1490.6 1179.6 C 1559.2 1188.8 1566.3 1188.8 1636.5 1188.8 C 1712.2 1188.8 1708.3 1155.6 1782.4 1128.7 C 1854.2 1102.6 1856.1 1082.8 1928.3 1082.8 C 2002.0 1082.8 2000.4 1113.4 2074.2 1138.9 C 2146.3 1163.7 2145.5 1178.2 2220.1 1183.6 C 2291.4 1188.8 2293.0 1186.4 2366.0 1188.8 C 2438.9 1191.1 2438.9 1191.9 2511.9 1192.9 C 2584.8 1193.9 2584.8 1193.5 2657.8 1193.9 C 2730.7 1194.3 2730.7 1194.4 2803.7 1194.6 C 2876.6 1194.7 2949.6 1194.7 2949.6 1194.7 L 2949.6 1194.9 L 469.3 1194.9 Z" fill="rgba(70,152,127,0.7)"/>
<path d="M 469.3 1194.7 C 469.3 1194.7 542.2 1194.6 615.2 1194.6 C 688.1 1194.5 688.2 1194.6 761.1 1194.5 C 834.1 1194.3 834.2 1194.5 907.0 1193.2 C 980.1 1191.9 979.8 1183.9 1052.9 1177.9 C 1125.7 1172.0 1129.2 1177.9 1198.8 1169.4 C 1275.1 1160.1 1272.8 1103.2 1344.7 1103.2 C 1418.7 1103.2 1413.3 1169.3 1490.6 1179.6 C 1559.2 1188.8 1566.3 1188.8 1636.5 1188.8 C 1712.2 1188.8 1708.3 1155.6 1782.4 1128.7 C 1854.2 1102.6 1856.1 1082.8 1928.3 1082.8 C 2002.0 1082.8 2000.4 1113.4 2074.2 1138.9 C 2146.3 1163.7 2145.5 1178.2 2220.1 1183.6 C 2291.4 1188.8 2293.0 1186.4 2366.0 1188.8 C 2438.9 1191.1 2438.9 1191.9 2511.9 1192.9 C 2584.8 1193.9 2584.8 1193.5 2657.8 1193.9 C 2730.7 1194.3 2730.7 1194.4 2803.7 1194.6 C 2876.6 1194.7 2949.6 1194.7 2949.6 1194.7" fill="none" stroke="#43967e" stroke-width="3.2" stroke-linejoin="round"/>
<circle cx="469.3" cy="1194.7" r="3.2" fill="#fff" stroke="#43967e" stroke-width="3.2"/>
<circle cx="615.2" cy="1194.6" r="3.2" fill="#fff" stroke="#43967e" stroke-width="3.2"/>
<circle cx="761.1" cy="1194.5" r="3.2" fill="#fff" stroke="#43967e" stroke-width="3.2"/>
<circle cx="907.0" cy="1193.2" r="3.2" fill="#fff" stroke="#43967e" stroke-width="3.2"/>
<circle cx="1052.9" cy="1177.9" r="3.2" fill="#fff" stroke="#43967e" stroke-width="3.2"/>
<circle cx="1198.8" cy="1169.4" r="3.2" fill="#fff" stroke="#43967e" stroke-width="3.2"/>
<circle cx="1344.7" cy="1103.2" r="3.2" fill="#fff" stroke="#43967e" stroke-width="3.2"/>
<circle cx="1490.6" cy="1179.6" r="3.2" fill="#fff" stroke="#43967e" stroke-width="3.2"/>
<circle cx="1636.5" cy="1188.8" r="3.2" fill="#fff" stroke="#43967e" stroke-width="3.2"/>
<circle cx="1782.4" cy="1128.7" r="3.2" fill="#fff" stroke="#43967e" stroke-width="3.2"/>
<circle cx="1928.3" cy="1082.8" r="3.2" fill="#fff" stroke="#43967e" stroke-width="3.2"/>
<circle cx="2074.2" cy="1138.9" r="3.2" fill="#fff" stroke="#43967e" stroke-width="3.2"/>
<circle cx="2220.1" cy="1183.6" r="3.2" fill="#fff" stroke="#43967e" stroke-width="3.2"/>
<circle cx="2366.0" cy="1188.8" r="3.2" fill="#fff" stroke="#43967e" stroke-width="3.2"/>
<circle cx="2511.9" cy="1192.9" r="3.2" fill="#fff" stroke="#43967e" stroke-width="3.2"/>
<circle cx="2657.8" cy="1193.9" r="3.2" fill="#fff" stroke="#43967e" stroke-width="3.2"/>
<circle cx="2803.7" cy="1194.6" r="3.2" fill="#fff" stroke="#43967e" stroke-width="3.2"/>
<circle cx="2949.6" cy="1194.7" r="3.2" fill="#fff" stroke="#43967e" stroke-width="3.2"/>
<text x="456" y="787.3" text-anchor="end" dominant-baseline="central" font-family="Liberation Sans" font-size="20" fill="#6e7079">80,000</text>
<text x="456" y="889.2" text-anchor="end" dominant-baseline="central" font-family="Liberation Sans" font-size="20" fill="#6e7079">60,000</text>
<text x="456" y="991.1" text-anchor="end" dominant-baseline="central" font-family="Liberation Sans" font-size="20" fill="#6e7079">40,000</text>
<text x="456" y="1093.0" text-anchor="end" dominant-baseline="central" font-family="Liberation Sans" font-size="20" fill="#6e7079">20,000</text>
<text x="456" y="1194.9" text-anchor="end" dominant-baseline="central" font-family="Liberation Sans" font-size="20" fill="#6e7079">0</text>
<text x="469.3" y="1209.5" text-anchor="middle" dominant-baseline="hanging" font-family="Liberation Sans" font-size="20" fill="#6e7079">6:00</text>
<text x="615.2" y="1209.5" text-anchor="middle" dominant-baseline="hanging" font-family="Liberation Sans" font-size="20" fill="#6e7079">7:00</text>
<text x="761.1" y="1209.5" text-anchor="middle" dominant-baseline="hanging" font-family="Liberation Sans" font-size="20" fill="#6e7079">8:00</text>
<text x="907.0" y="1209.5" text-anchor="middle" dominant-baseline="hanging" font-family="Liberation Sans" font-size="20" fill="#6e7079">9:00</text>
<text x="1052.9" y="1209.5" text-anchor="middle" dominant-baseline="hanging" font-family="Liberation Sans" font-size="20" fill="#6e7079">10:00</text>
<text x="1198.8" y="1209.5" text-anchor="middle" dominant-baseline="hanging" font-family="Liberation Sans" font-size="20" fill="#6e7079">11:00</text>
<text x="1344.7" y="1209.5" text-anchor="middle" dominant-baseline="hanging" font-family="Liberation Sans" font-size="20" fill="#6e7079">12:00</text>
<text x="1490.6" y="1209.5" text-anchor="middle" dominant-baseline="hanging" font-family="Liberation Sans" font-size="20" fill="#6e7079">13:00</text>
<text x="1636.5" y="1209.5" text-anchor="middle" dominant-baseline="hanging" font-family="Liberation Sans" font-size="20" fill="#6e7079">14:00</text>
<text x="1782.4" y="1209.5" text-anchor="middle" dominant-baseline="hanging" font-family="Liberation Sans" font-size="20" fill="#6e7079">15:00</text>
<text x="1928.3" y="1209.5" text-anchor="middle" dominant-baseline="hanging" font-family="Liberation Sans" font-size="20" fill="#6e7079">16:00</text>
<text x="2074.2" y="1209.5" text-anchor="middle" dominant-baseline="hanging" font-family="Liberation Sans" font-size="20" fill="#6e7079">17:00</text>
<text x="2220.1" y="1209.5" text-anchor="middle" dominant-baseline="hanging" font-family="Liberation Sans" font-size="20" fill="#6e7079">18:00</text>
<text x="2366.0" y="1209.5" text-anchor="middle" dominant-baseline="hanging" font-family="Liberation Sans" font-size="20" fill="#6e7079">19:00</text>
<text x="2511.9" y="1209.5" text-anchor="middle" dominant-baseline="hanging" font-family="Liberation Sans" font-size="20" fill="#6e7079">20:00</text>
<text x="2657.8" y="1209.5" text-anchor="middle" dominant-baseline="hanging" font-family="Liberation Sans" font-size="20" fill="#6e7079">21:00</text>
<text x="2803.7" y="1209.5" text-anchor="middle" dominant-baseline="hanging" font-family="Liberation Sans" font-size="20" fill="#6e7079">22:00</text>
<text x="2949.6" y="1209.5" text-anchor="middle" dominant-baseline="hanging" font-family="Liberation Sans" font-size="20" fill="#6e7079">23:00</text>
</svg>
</body></html>
